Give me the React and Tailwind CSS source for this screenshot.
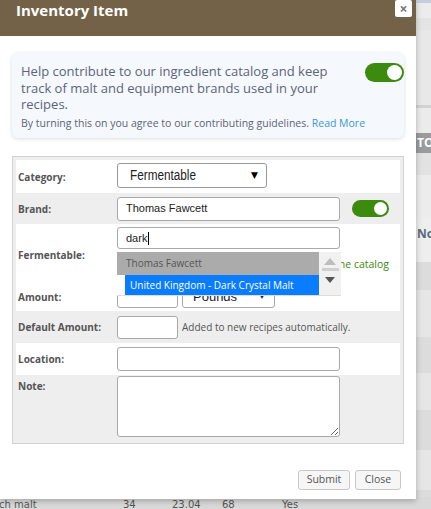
const bgRows = [
  { h: 3, bg: "bg-[#c6cede]" },
  { h: 15, bg: "bg-[#ececec]" },
  { h: 12, bg: "bg-[#e4e4e4]" },
  { h: 75, bg: "bg-[#e8e8e8]" },
  { h: 3, bg: "bg-[#d2d2d2]" },
  { h: 25, bg: "bg-[#ebebeb]" },
  { h: 20, bg: "bg-[#9b9b9b]", text: "TOTAL", cls: "text-white font-bold" },
  { h: 22, bg: "bg-[#e2e2e2]" },
  { h: 42, bg: "bg-[#ececec]" },
  { h: 45, bg: "bg-[#eeeeee]", text: "Notes", cls: "text-[#5b6a80] font-bold", pad: "items-start pt-[9px]" },
  { h: 28, bg: "bg-[#dcdcdc]" },
  { h: 47, bg: "bg-[#e6e6e6]" },
  { h: 36, bg: "bg-[#dcdcdc]" },
  { h: 37, bg: "bg-[#e6e6e6]" },
  { h: 40, bg: "bg-[#dcdcdc]" },
  { h: 40, bg: "bg-[#e6e6e6]" },
  { h: 7, bg: "bg-[#dcdcdc]" },
];

function Toggle({ w, h }) {
  return (
    <div
      className="flex items-center justify-end rounded-full bg-[#3c8a0e] p-[2px]"
      style={{ width: w, height: h }}
    >
      <div className="rounded-full bg-white" style={{ width: h - 4, height: h - 4 }} />
    </div>
  );
}

function Label({ children }) {
  return (
    <div className="w-[101px] shrink-0 pl-[2px] text-[10px] font-bold leading-[14px] text-[#555]">
      {children}
    </div>
  );
}

const inputCls =
  "rounded-[3px] border border-[#a9a9a9] bg-white font-['Liberation_Sans',Arial,sans-serif] text-[11px] text-[#222]";

export default function App() {
  return (
    <div className="relative h-[509px] w-[431px] overflow-hidden bg-[#e6e6e6] font-['Open_Sans',sans-serif]">
      {/* page table behind the dialog */}
      <div className="flex flex-col">
        {bgRows.map((r, i) => (
          <div key={i} className={`flex ${r.pad || "items-center"} ${r.bg}`} style={{ height: r.h }}>
            <div className="w-[417px] shrink-0" />
            {r.text && <span className={`whitespace-nowrap text-[12px] leading-[16px] ${r.cls}`}>{r.text}</span>}
          </div>
        ))}
        <div className="-ml-[25px] flex h-[14px] items-center bg-[#d9d9d9] font-['DejaVu_Sans',Verdana,sans-serif] text-[10px] text-[#555]">
          <span className="w-[148px] shrink-0">Munich malt</span>
          <span className="w-[49px] shrink-0">34</span>
          <span className="w-[50px] shrink-0">23.04</span>
          <span className="w-[60px] shrink-0">68</span>
          <span>Yes</span>
        </div>
      </div>

      {/* dialog */}
      <div className="absolute left-0 top-0 flex h-[499px] w-[416px] flex-col bg-white shadow-[0_2px_6px_rgba(0,0,0,0.25)]">
        <div className="flex h-[36px] shrink-0 items-start justify-between bg-[#736248] pl-[16px] pr-[4px]">
          <div className="text-[15px] font-bold leading-[20px] text-white">Inventory Item</div>
          <button className="flex h-[17px] w-[17px] items-center justify-center rounded-[2px] bg-white text-[14px] font-bold leading-none text-[#777]">
            ×
          </button>
        </div>

        <div className="flex flex-col px-[12px]">
          {/* contribution notice */}
          <div className="mt-[17px] flex h-[85px] justify-between rounded-[6px] bg-[#f5f8fc] pl-[9px] pr-[10px] pt-[10px] shadow-[0_1px_4px_rgba(0,0,0,0.14)]">
            <div className="flex flex-col">
              <p className="w-[325px] text-[13px] leading-[16.5px] text-[#5c6579]">
                Help contribute to our ingredient catalog and keep track of malt and equipment brands used in your recipes.
              </p>
              <p className="mt-[3px] whitespace-nowrap text-[10.5px] leading-[14px] text-[#5c6579]">
                By turning this on you agree to our contributing guidelines.{" "}
                <span className="text-[#3a98d8]">Read More</span>
              </p>
            </div>
            <div>
              <Toggle w={39} h={19} />
            </div>
          </div>

          {/* form */}
          <div className="mt-[18px] flex flex-col border border-[#d3d3d3] bg-[#eeeeee] p-[3px]">
            <div className="flex h-[33px] items-start bg-white">
              <div className="self-center"><Label>Category:</Label></div>
              <div className="mt-[3px] flex h-[25px] w-[150px] items-center justify-between rounded-[3px] border border-[#999] bg-white pl-[12px] pr-[8px] font-['Liberation_Sans',Arial,sans-serif] text-[14px] text-[#222]">
                <span className="inline-block origin-left scale-x-[0.84]">Fermentable</span>
                <span className="font-['DejaVu_Sans',sans-serif] text-[9px] text-black">▼</span>
              </div>
            </div>

            <div className="flex h-[31px] items-center">
              <Label>Brand:</Label>
              <div className={`flex h-[24px] w-[223px] items-center pl-[8px] ${inputCls}`}>Thomas Fawcett</div>
              <div className="ml-[12px]">
                <Toggle w={37} h={17} />
              </div>
            </div>

            <div className="flex h-[59px] items-start bg-white">
              <div className="self-center pt-[3px]"><Label>Fermentable:</Label></div>
              <div className="flex flex-1 flex-col pt-[3px]">
                <div className="relative w-[223px]">
                  <div className={`flex h-[22px] items-center pl-[8px] ${inputCls}`}>
                    dark<span className="ml-[1px] h-[13px] w-px bg-black" />
                  </div>
                  {/* autocomplete list */}
                  <div className="absolute left-0 top-[25px] z-10 flex h-[44px] w-[224px] border-b border-[#ddd] bg-white">
                    <div className="flex w-[202px] flex-col">
                      <div className="flex h-[24px] items-center bg-[#ababab] pl-[9px] text-[10px] text-[#555]">Thomas Fawcett</div>
                      <div className="flex h-[20px] pl-[8px]">
                        <div className="flex flex-1 items-center bg-[#0a7cff] pl-[5px] text-[10px] text-white">
                          United Kingdom - Dark Crystal Malt
                        </div>
                      </div>
                    </div>
                    <div className="flex w-[22px] flex-col items-center bg-[#f1f1f1] pt-[6px]">
                      <svg width="12" height="7" viewBox="0 0 12 7"><path d="M0 7 L6 0 L12 7 Z" fill="#bdbdbd" /></svg>
                      <div className="mt-[3px] h-[3px] w-[17px] bg-[#cfcfcf]" />
                      <svg className="mt-[6px]" width="10" height="6" viewBox="0 0 10 6"><path d="M0 0 L10 0 L5 6 Z" fill="#555" /></svg>
                    </div>
                  </div>
                </div>
                <div className="mt-[8px] flex justify-end pr-[11px] text-[10.5px] leading-[14px] text-[#3c8a0e]">
                  Can't find it? Add it to the catalog
                </div>
              </div>
            </div>

            <div className="flex h-[28px] items-center bg-white">
              <Label>Amount:</Label>
              <div className={`h-[21px] w-[61px] ${inputCls}`} />
              <div className="ml-[4px] flex h-[21px] w-[93px] items-center justify-between rounded-[3px] border border-[#a9a9a9] bg-white pl-[10px] pr-[8px] font-['Liberation_Sans',Arial,sans-serif] text-[13px] text-[#222]">
                <span>Pounds</span>
                <span className="text-[8px]">▼</span>
              </div>
            </div>

            <div className="flex h-[32px] items-center">
              <Label>Default Amount:</Label>
              <div className={`h-[23px] w-[61px] ${inputCls}`} />
              <span className="ml-[4px] text-[10px] text-[#555]">Added to new recipes automatically.</span>
            </div>

            <div className="flex h-[32px] items-center bg-white">
              <Label>Location:</Label>
              <div className={`h-[24px] w-[223px] ${inputCls}`} />
            </div>

            <div className="flex h-[65px] items-start">
              <div className="pt-[4px]"><Label>Note:</Label></div>
              <textarea className={`mt-[1px] h-[61px] w-[223px] outline-none ${inputCls}`} />
            </div>
          </div>

          <div className="mt-[26px] flex justify-end gap-[5px] pr-[3px]">
            <button className="flex h-[20px] w-[52px] items-center justify-center rounded-[3px] border border-[#c8c8c8] bg-[#f6f6f6] text-[10.5px] text-[#555]">
              Submit
            </button>
            <button className="flex h-[20px] w-[46px] items-center justify-center rounded-[3px] border border-[#c8c8c8] bg-[#f6f6f6] text-[10.5px] text-[#555]">
              Close
            </button>
          </div>
        </div>
      </div>
    </div>
  );
}
